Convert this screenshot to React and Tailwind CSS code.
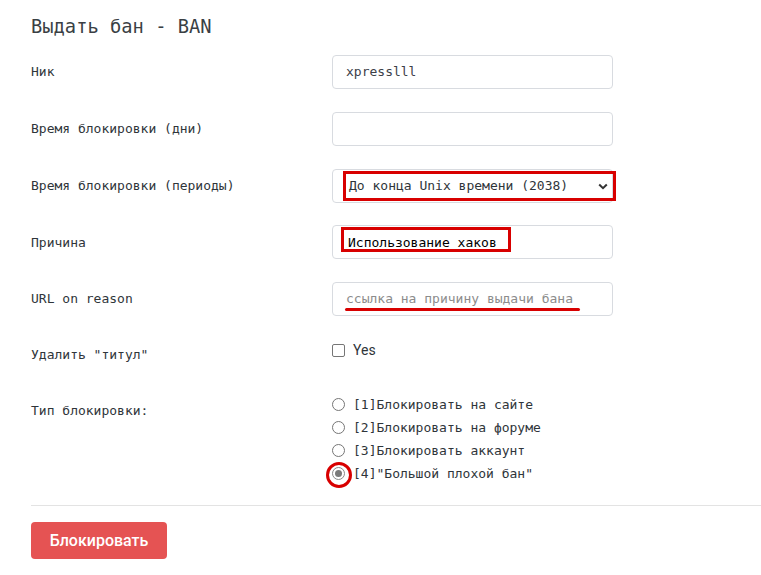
import React from "react";

const mono = { fontFamily: '"DejaVu Sans Mono", "Liberation Mono", monospace' };

function Row({ label, children, last }) {
  return (
    <div className={`flex items-center h-[34px] ${last ? "" : "mb-[22.75px]"}`}>
      <div className="w-[301px] text-[13px] text-[#2f353a]">{label}</div>
      <div className="w-[281px] h-[34px] relative">{children}</div>
    </div>
  );
}

const inputCls =
  "w-full h-full border border-[#d8dbe0] rounded-[4px] bg-white flex items-center pl-[13px] text-[13px]";

function Radio({ checked, children }) {
  return (
    <div className="flex items-center h-[23px]">
      <span className="relative w-[13px] h-[13px] shrink-0">
        <span
          className={`absolute inset-0 rounded-full border ${
            checked ? "border-[#8a8a8a]" : "border-[#767676]"
          } bg-white flex items-center justify-center`}
        >
          {checked && <span className="w-[7px] h-[7px] rounded-full bg-[#7a7a7a]" />}
        </span>
        {checked && (
          <span className="absolute -left-[6.5px] -top-[5px] w-[26px] h-[26px] rounded-full border-[3px] border-[#d80000]" />
        )}
      </span>
      <span className="ml-[8px] text-[13px] text-[#2f353a]">{children}</span>
    </div>
  );
}

export default function App() {
  return (
    <div className="bg-white w-[761px] h-[575px] overflow-hidden pl-[31px] pt-[14px]" style={mono}>
      <div className="text-[18.75px] leading-[26px] text-[#3a3f44]">Выдать бан - BAN</div>

      <div className="mt-[15px]">
        <Row label="Ник">
          <div className={inputCls + " text-[#3c4048]"}>xpresslll</div>
        </Row>
        <Row label="Время блокировки (дни)">
          <div className={inputCls} />
        </Row>
        <Row label="Время блокировки (периоды)">
          <div className={inputCls + " justify-between pr-[4px] text-[#2f353a]"}>
            <span className="ml-[3px]">До конца Unix времени (2038)</span>
            <svg width="10" height="7" viewBox="0 0 10 7" className="mt-[1px]">
              <path d="M1.2 1.5 L5 5.2 L8.8 1.5" fill="none" stroke="#333" strokeWidth="2" />
            </svg>
          </div>
          <span className="absolute left-[11px] top-[2px] w-[273px] h-[30px] border-[3px] border-[#d80000]" />
        </Row>
        <Row label="Причина">
          <div className={inputCls + " bg-[#e8f0fe] text-black"}>
            <span className="ml-[2px]">Использование хаков</span>
          </div>
          <span className="absolute left-[9px] top-[2px] w-[170px] h-[25px] border-[3px] border-[#d80000]" />
        </Row>
        <Row label="URL on reason" last>
          <div className={inputCls + " text-[#8c8c8c]"}>ссылка на причину выдачи бана</div>
          <span className="absolute left-[13px] top-[26px] w-[235px] h-[3px] rounded-full bg-[#d80000]" />
        </Row>

        <div className="flex items-start mt-[24px]">
          <div className="w-[301px] text-[13px] text-[#2f353a] pt-[5px] leading-[20px]">Удалить "титул"</div>
          <div className="flex items-center h-[20px]">
            <span className="w-[13px] h-[13px] border border-[#767676] rounded-[2px] bg-white" />
            <span
              className="ml-[8px] text-[14px] text-[#2f353a]"
              style={{ fontFamily: 'Roboto, "Liberation Sans", sans-serif' }}
            >
              Yes
            </span>
          </div>
        </div>

        <div className="flex items-start mt-[28px]">
          <div className="w-[301px] text-[13px] text-[#2f353a] pt-[7.5px] leading-[20px]">Тип блокировки:</div>
          <div>
            <Radio>[1]Блокировать на сайте</Radio>
            <Radio>[2]Блокировать на форуме</Radio>
            <Radio>[3]Блокировать аккаунт</Radio>
            <Radio checked>[4]"Большой плохой бан"</Radio>
          </div>
        </div>
      </div>

      <div className="mt-[20px] h-px bg-[#e3e3e3]" />

      <button
        className="mt-[16px] w-[136px] h-[37px] rounded-[4px] bg-[#e55353] text-white text-[16px] font-medium"
        style={{ fontFamily: 'Roboto, "Liberation Sans", sans-serif' }}
      >
        Блокировать
      </button>
    </div>
  );
}
